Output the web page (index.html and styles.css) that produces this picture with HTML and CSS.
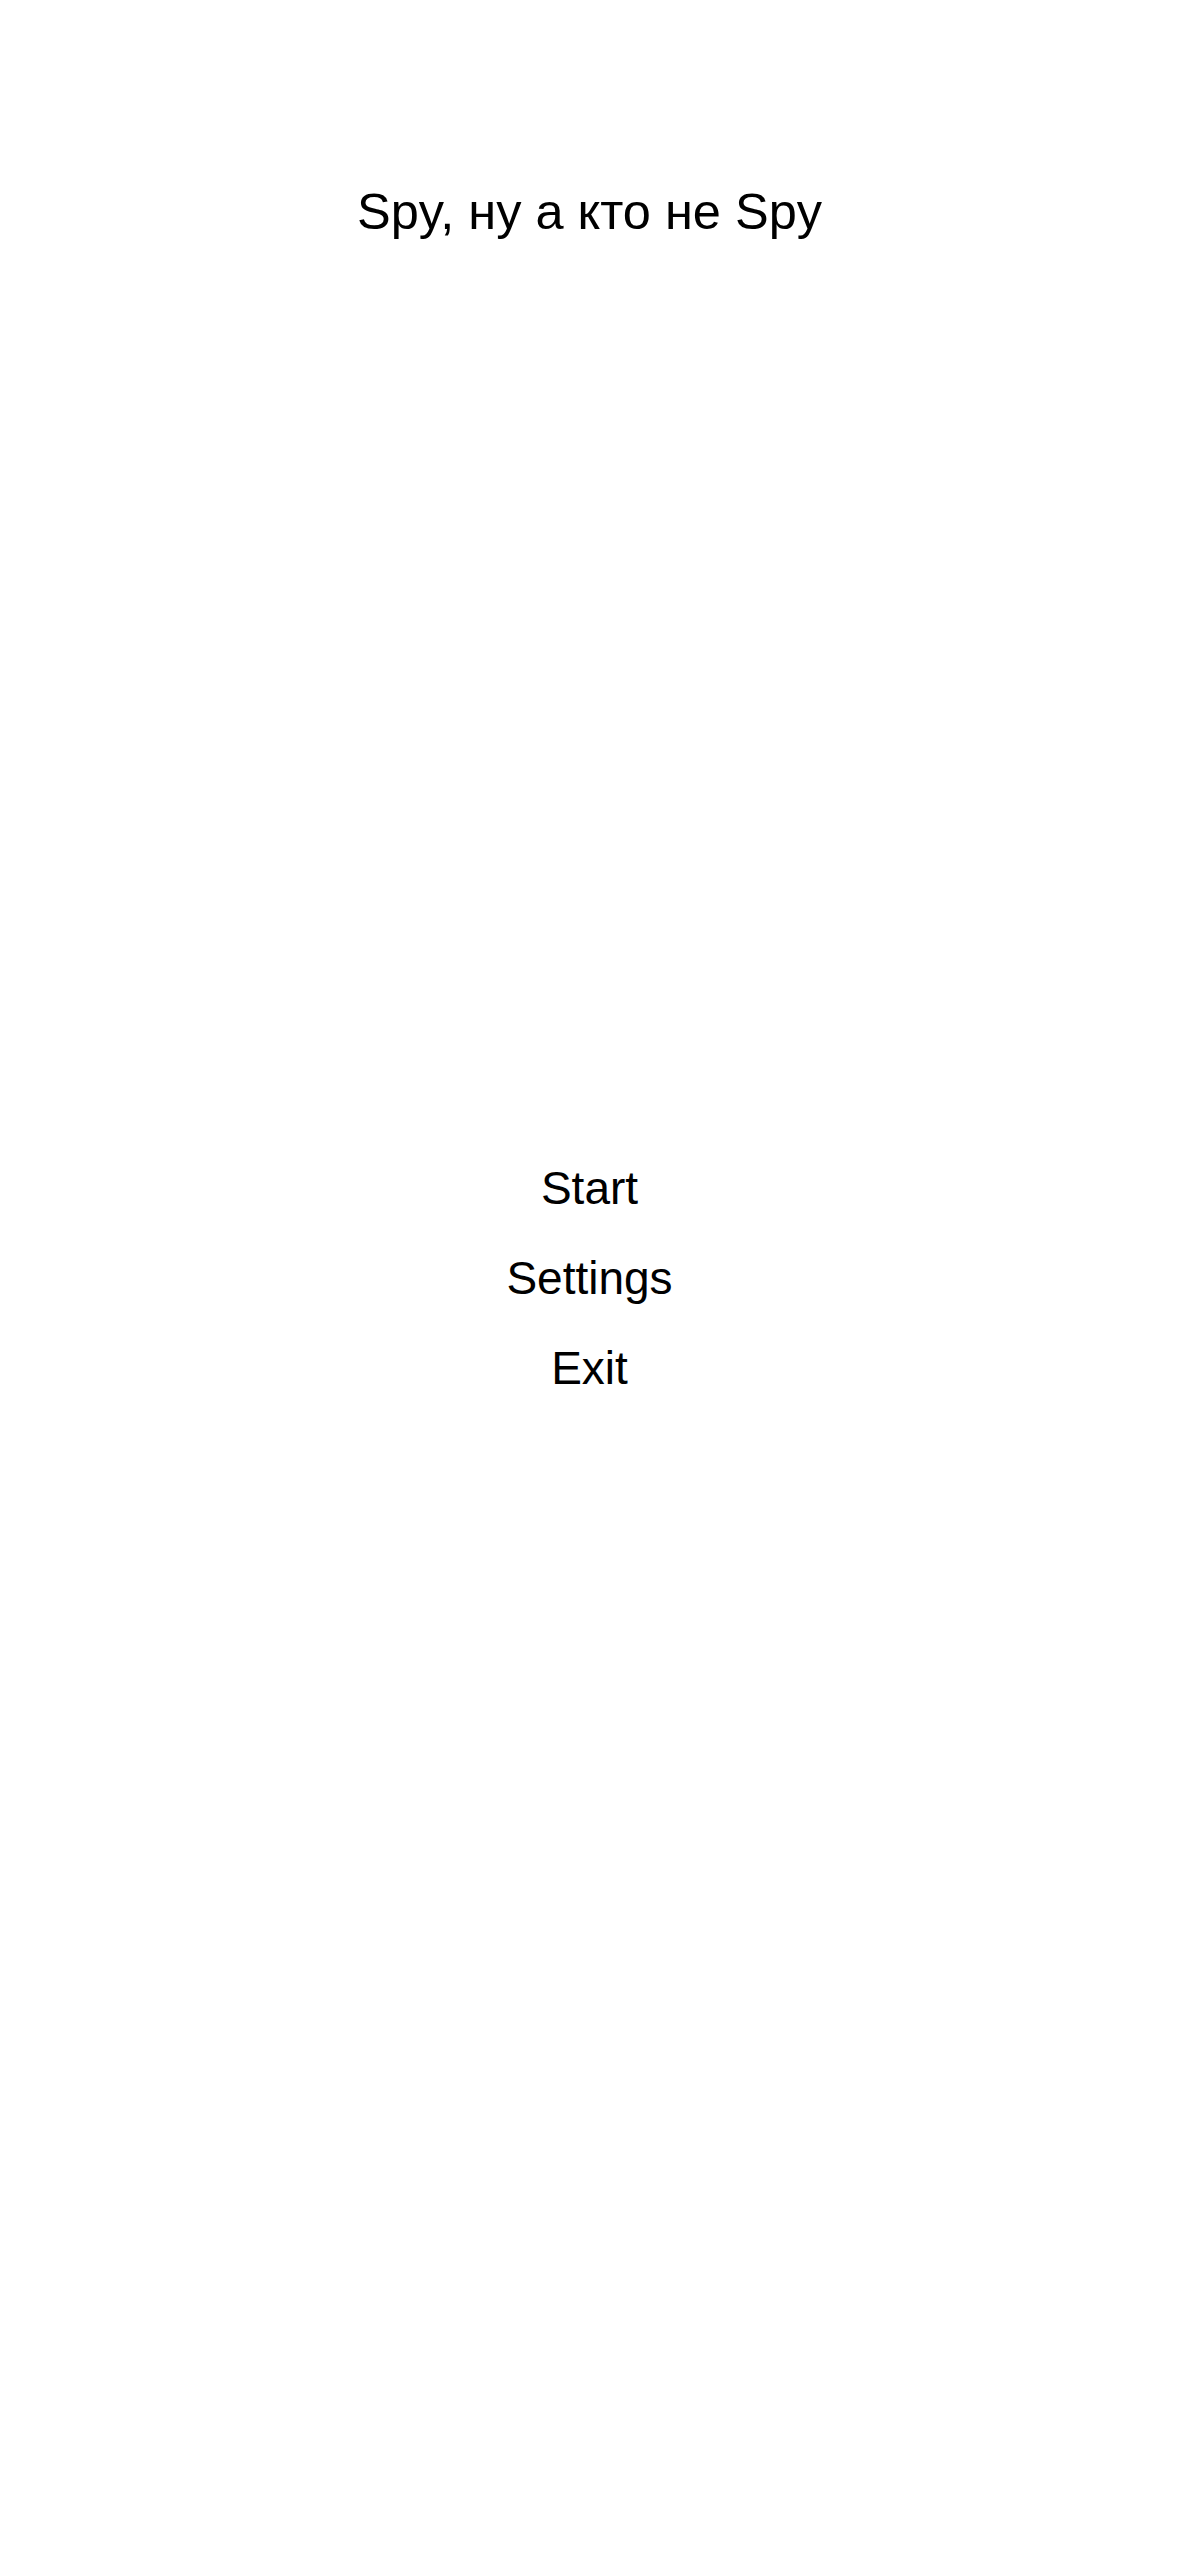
FILE: index.html
```html
<!DOCTYPE html>
<html>
<head>
<meta charset="utf-8">
<link rel="stylesheet" href="styles.css">
</head>
<body>
<main class="screen">
  <h1 class="title">Spy, ну а кто не Spy</h1>
  <nav class="menu">
    <button class="menu-item">Start</button>
    <button class="menu-item">Settings</button>
    <button class="menu-item">Exit</button>
  </nav>
</main>
</body>
</html>
```
FILE: styles.css
```css
html, body {
  margin: 0;
  padding: 0;
  background: #ffffff;
}
.screen {
  width: 1179px;
  height: 2556px;
  display: flex;
  flex-direction: column;
  align-items: center;
  font-family: "Liberation Sans", Arial, sans-serif;
  color: #000;
  padding-top: 182px;
  box-sizing: border-box;
}
.title {
  margin: 0;
  font-size: 50.5px;
  font-weight: 400;
  line-height: 60px;
}
.menu {
  margin-top: 901px;
  display: flex;
  flex-direction: column;
  align-items: center;
}
.menu-item {
  background: none;
  border: none;
  padding: 0;
  font-family: inherit;
  font-size: 46px;
  line-height: 90px;
  color: #000;
}
```
